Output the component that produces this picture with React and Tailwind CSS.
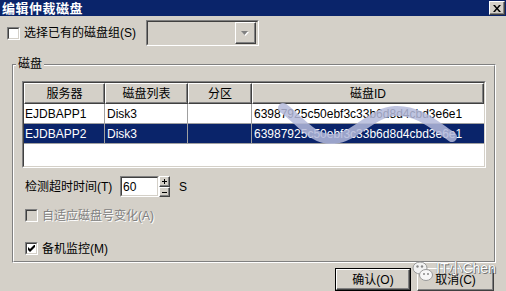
import React from 'react';

const FONT = "font-['Liberation_Sans','Noto_Sans_CJK_SC',sans-serif]";

// classic win32 checkbox
const Check = ({ checked, disabled }) => (
  <div className="w-[13px] h-[13px] shrink-0 border border-t-[#808080] border-l-[#808080] border-r-white border-b-white">
    <div
      className={`w-full h-full flex items-center justify-center border border-t-[#404040] border-l-[#404040] border-r-[#d4d0c8] border-b-[#d4d0c8] ${
        disabled ? 'bg-[#d4d0c8]' : 'bg-white'
      }`}
    >
      {checked && (
        <svg width="7" height="7" viewBox="0 0 7 7">
          <path d="M0 2 L2 4 L7 -1 L7 2 L2 7 L0 5 Z" fill="#000" />
        </svg>
      )}
    </div>
  </div>
);

const HeaderCell = ({ width, children }) => (
  <div
    className={`${width} h-full shrink-0 flex items-center justify-center border border-t-white border-l-white border-r-[#404040] border-b-[#404040] shadow-[inset_-1px_-1px_0_#808080] bg-[#d4d0c8] text-[12px] text-black`}
  >
    {children}
  </div>
);

const rows = [
  { server: 'EJDBAPP1', disk: 'Disk3', part: '', id: '63987925c50ebf3c33b6d8d4cbd3e6e1', selected: false },
  { server: 'EJDBAPP2', disk: 'Disk3', part: '', id: '63987925c50ebf3c33b6d8d4cbd3e6e1', selected: true },
];

const Button = ({ children, isDefault, width }) => (
  <div className={`${width} h-[23px] ${isDefault ? 'border border-black' : ''}`}>
    <div className="w-full h-full flex items-center justify-center border border-t-white border-l-white border-r-[#404040] border-b-[#404040] shadow-[inset_-1px_-1px_0_#808080] text-[12px] text-black">
      {children}
    </div>
  </div>
);

const App = () => {
  return (
    <div className={`relative w-[506px] h-[291px] overflow-hidden bg-[#d4d0c8] flex flex-col ${FONT}`}>
      {/* title bar */}
      <div className="h-[16px] bg-[#0a246a] flex items-center justify-between pl-[2px] pr-[1px]">
        <span className="text-white font-bold text-[13px] leading-none tracking-[0.5px]">编辑仲裁磁盘</span>
        <div className="w-[16px] h-[14px] flex items-center justify-center border border-t-white border-l-white border-r-[#404040] border-b-[#404040] shadow-[inset_-1px_-1px_0_#808080] bg-[#d4d0c8]">
          <svg width="8" height="7" viewBox="0 0 8 7">
            <path d="M0 0 L2 0 L4 2.5 L6 0 L8 0 L5 3.5 L8 7 L6 7 L4 4.5 L2 7 L0 7 L3 3.5 Z" fill="#000" />
          </svg>
        </div>
      </div>

      {/* disk group select */}
      <div className="mt-[4px] h-[26px] flex items-center pl-[7px]">
        <Check />
        <span className="ml-[4px] w-[122px] text-[12px] text-black leading-none">选择已有的磁盘组(S)</span>
        <div className="w-[113px] h-[26px] border border-t-[#808080] border-l-[#808080] border-r-white border-b-white">
          <div className="w-full h-full flex justify-end pr-[1px] border border-t-[#404040] border-l-[#404040] border-r-[#d4d0c8] border-b-[#d4d0c8] bg-[#d4d0c8]">
            <div className="w-[21px] h-full flex items-center justify-center border border-t-white border-l-white border-r-[#404040] border-b-[#404040] shadow-[inset_-1px_-1px_0_#808080]">
              <svg width="9" height="5" viewBox="0 0 9 5">
                <path d="M1 1 L8 1 L4.5 5 Z" fill="#fff" />
                <path d="M0 0 L7 0 L3.5 4 Z" fill="#808080" />
              </svg>
            </div>
          </div>
        </div>
      </div>

      {/* group box */}
      <div className="relative mt-[18px] ml-[12px] w-[484px] h-[199px] border border-t-[#808080] border-l-[#808080] border-r-white border-b-white">
        <div className="w-full h-full flex flex-col border border-t-white border-l-white border-r-[#808080] border-b-[#808080]">
          {/* table */}
          <div className="ml-[8px] mt-[15px] w-[464px] h-[87px] shrink-0 border border-t-[#808080] border-l-[#808080] border-r-white border-b-white">
            <div className="w-full h-full flex flex-col bg-white border border-t-[#404040] border-l-[#404040] border-r-[#d4d0c8] border-b-[#d4d0c8]">
              <div className="h-[21px] flex">
                <HeaderCell width="w-[81px]">服务器</HeaderCell>
                <HeaderCell width="w-[83px]">磁盘列表</HeaderCell>
                <HeaderCell width="w-[64px]">分区</HeaderCell>
                <HeaderCell width="w-[232px]">磁盘ID</HeaderCell>
              </div>
              {rows.map((r) => (
                <div
                  key={r.server}
                  className={`h-[20px] flex text-[12px] ${r.selected ? 'bg-[#0a246a] text-white' : 'bg-white text-black'}`}
                >
                  <div className="w-[81px] shrink-0 flex items-center pl-[1px] border-r border-b border-[#a0a0a0]">{r.server}</div>
                  <div className="w-[83px] shrink-0 flex items-center pl-[2px] border-r border-b border-[#a0a0a0]">{r.disk}</div>
                  <div className="w-[64px] shrink-0 flex items-center pl-[2px] border-r border-b border-[#a0a0a0]">{r.part}</div>
                  <div className="w-[232px] shrink-0 flex items-center pl-[2px] border-b border-[#a0a0a0]">{r.id}</div>
                </div>
              ))}
            </div>
          </div>

          {/* timeout */}
          <div className="mt-[8px] ml-[11px] h-[21px] flex items-center text-[12px] text-black">
            <span className="w-[95px] leading-none">检测超时时间(T)</span>
            <div className="w-[39px] h-[21px] border border-t-[#808080] border-l-[#808080] border-r-white border-b-white">
              <div className="w-full h-full flex items-center pl-[1px] bg-white border border-t-[#404040] border-l-[#404040] border-r-[#d4d0c8] border-b-[#d4d0c8]">
                60
              </div>
            </div>
            <div className="w-[11px] h-[21px] flex flex-col">
              <div className="h-[11px] flex items-center justify-center border border-t-white border-l-white border-r-[#404040] border-b-[#404040] shadow-[inset_-1px_-1px_0_#808080]">
                <svg width="5" height="5" viewBox="0 0 5 5">
                  <path d="M2 0 H3 V2 H5 V3 H3 V5 H2 V3 H0 V2 H2 Z" fill="#000" />
                </svg>
              </div>
              <div className="h-[10px] flex items-center justify-center border border-t-white border-l-white border-r-[#404040] border-b-[#404040] shadow-[inset_-1px_-1px_0_#808080]">
                <svg width="5" height="1" viewBox="0 0 5 1">
                  <rect width="5" height="1" fill="#000" />
                </svg>
              </div>
            </div>
            <span className="ml-[9px]">S</span>
          </div>

          {/* adaptive disk number */}
          <div className="mt-[12px] ml-[11px] h-[13px] flex items-center">
            <Check disabled />
            <span className="ml-[4px] text-[12px] leading-none text-[#808080] [text-shadow:1px_1px_0_#fff]">自适应磁盘号变化(A)</span>
          </div>

          {/* standby monitor */}
          <div className="mt-[20px] ml-[11px] h-[13px] flex items-center">
            <Check checked />
            <span className="ml-[4px] text-[12px] leading-none text-black">备机监控(M)</span>
          </div>
        </div>
        <span className="absolute top-[-8px] left-[3px] px-[2px] bg-[#d4d0c8] text-[12px] leading-[14px] text-black">磁盘</span>
      </div>

      {/* buttons */}
      <div className="mt-[5px] flex justify-end pr-[12px] gap-[6px]">
        <Button isDefault width="w-[76px]">确认(O)</Button>
        <Button width="w-[77px]">取消(C)</Button>
      </div>

      {/* redaction scribble */}
      <svg className="absolute left-0 top-0 pointer-events-none" width="506" height="291" viewBox="0 0 506 291">
        <path
          d="M283 108 C 298 118, 312 141, 334 139 S 372 112, 395 111 S 433 124, 452 137"
          fill="none"
          stroke="rgba(180,186,218,0.85)"
          strokeWidth="10"
          strokeLinecap="round"
        />
      </svg>

      {/* watermark */}
      <div className="absolute left-[412px] top-[260px] flex items-start pointer-events-none">
        <svg width="22" height="24" viewBox="0 0 22 24">
          <ellipse cx="8" cy="8" rx="7" ry="6" fill="#f2f2f2" stroke="#9a9a9a" strokeWidth="1" />
          <ellipse cx="14" cy="15" rx="6.5" ry="5.5" fill="#f7f7f7" stroke="#9a9a9a" strokeWidth="1" />
          <circle cx="5.5" cy="6.5" r="1.2" fill="#888" />
          <circle cx="10" cy="6.5" r="1.2" fill="#888" />
          <circle cx="12" cy="14" r="1" fill="#888" />
          <circle cx="16" cy="14" r="1" fill="#888" />
        </svg>
        <span className="ml-[2px] mt-[1px] text-[14px] leading-none text-white [text-shadow:0_0_1px_#666,1px_1px_0_#777]">IT小Chen</span>
      </div>
    </div>
  );
};

export default App;
